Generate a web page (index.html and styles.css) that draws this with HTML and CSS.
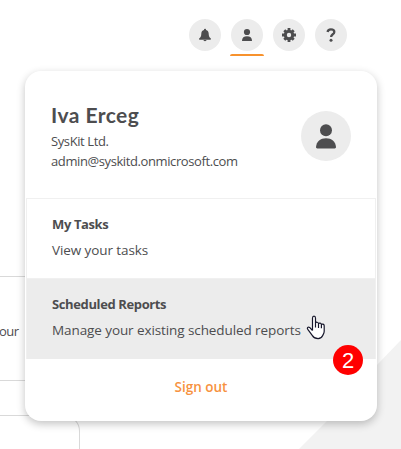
FILE: index.html
```
<!DOCTYPE html>
<html lang="en">
<head>
<meta charset="utf-8">
<title>SysKit</title>
<link rel="stylesheet" href="styles.css">
</head>
<body>
<header class="toolbar">
  <span class="tool"><svg width="14" height="14" viewBox="0 0 14 14"><path d="M7 .7c.6 0 1 .4 1 .9v.4c1.8.5 2.700 1.900 2.700 3.800 0 2.500.6 3.500 1.900 4.500.7.5.5 1.400-.4 1.400H1.800c-.9 0-1.100-.9-.4-1.400 1.300-1 1.900-2 1.900-4.500C3.300 3.900 4.200 2.500 6 2v-.4c0-.5.4-.9 1-.9zM5.500 12h3c0 .7-.6 1.200-1.500 1.200S5.500 12.700 5.500 12z"/></svg></span>
  <span class="tool active"><svg width="12" height="14" viewBox="0 0 12 14"><circle cx="6" cy="4" r="3.100"/><path d="M1 12.400C1 9.800 3 8.200 6 8.200s5 1.600 5 4.200c0 .4-.2.600-.6.600H1.600c-.4 0-.6-.2-.6-.6z"/></svg></span>
  <span class="tool"><svg width="14" height="14" viewBox="-7 -7 14 14"><circle r="3.700" fill="none" stroke="#4d4d4f" stroke-width="3"/><g stroke="#4d4d4f" stroke-width="2.800"><path d="M0-7v3M0 4v3M-7 0h3M4 0h3"/><path d="M-4.700-4.700l2 2M2.700 2.700l2 2M-4.700 4.700l2-2M2.700-2.700l2-2"/></g></svg></span>
  <span class="tool"><svg width="10" height="14" viewBox="0 0 10 14"><path d="M1.600 4C1.800 2.200 3 1.300 4.900 1.300c2 0 3.400 1 3.400 2.600 0 2.400-3.200 2.300-3.200 5" fill="none" stroke="#4d4d4f" stroke-width="2.300"/><circle cx="5" cy="12.200" r="1.500"/></svg></span>
</header>
<main class="page">
  <div class="row row-a"></div>
  <div class="row row-b"><span>our</span></div>
  <div class="row row-c"></div>
  <div class="panel"></div>
</main>
<svg class="corner" width="102" height="109" viewBox="0 0 102 109"><path d="M102 0v109H0L28 81 78 25z" fill="#f2f2f2"/></svg>
<section class="menu">
  <div class="profile">
    <div class="identity">
      <h1>Iva Erceg</h1>
      <p>SysKit Ltd.</p>
      <p>admin@syskitd.onmicrosoft.com</p>
    </div>
    <div class="avatar"><svg width="20" height="25" viewBox="0 0 20 25"><circle cx="10" cy="6.300" r="6"/><path d="M0 23C.5 17.500 4.500 14.300 10 14.300S19.500 17.500 20 23c0 .9-.5 1.400-1.300 1.400H1.300C.5 24.400 0 23.900 0 23z"/></svg></div>
  </div>
  <a class="item">
    <strong>My Tasks</strong>
    <span class="desc">View your tasks</span>
  </a>
  <a class="item hover">
    <strong>Scheduled Reports</strong>
    <span class="desc">Manage your existing scheduled reports</span>
  </a>
  <a class="signout">Sign out</a>
</section>
<svg class="cursor" width="20" height="25" viewBox="0 0 20 25"><path d="M6.500 15.500V3.200C6.500.5 9.500.5 9.500 3.200v5c.4-1.500 2.900-1.300 3 .6.600-1.200 2.800-.9 2.900.8.700-1 2.800-.6 2.800 1.200v5.400c0 2-.8 2.900-1.500 4.300-.8 1.900-2 3.100-4.600 3.100-3 0-4.500-1-5.700-3l-4.600-6.200c-1.200-1.700.4-3 1.800-2l2.900 3.100M9.500 8v4.500M12.500 9v4M15.400 9.800v3.500" fill="#fff" stroke="#17172b" stroke-width="1.200" stroke-linejoin="round"/></svg>
<div class="badge">2</div>
</body>
</html>
```
FILE: styles.css
```
* { box-sizing: border-box; }
body {
  margin: 0;
  width: 401px;
  height: 449px;
  overflow: hidden;
  position: relative;
  background: #fff;
  color: #4d4d4f;
  font: 13px/20px "Open Sans", "Noto Sans", sans-serif;
}
svg { display: block; fill: #4d4d4f; }
h1, p { margin: 0; font-weight: 400; }
p { letter-spacing: -.4px; }
.toolbar {
  display: flex;
  gap: 10px;
  height: 61px;
  padding: 19px 0 0 189px;
}
.tool {
  width: 32px;
  height: 32px;
  border-radius: 50%;
  background: #ececec;
  display: grid;
  place-items: center;
  position: relative;
}
.tool.active::after {
  content: "";
  position: absolute;
  left: -1px;
  top: 35px;
  width: 34px;
  height: 2px;
  border-radius: 2px 2px 0 0;
  background: #f7922d;
}
.page { padding-top: 215px; }
.row { width: 60px; border-top: 1px solid #d9d9d9; }
.row-a { height: 1px; }
.row-b { height: 103px; padding-top: 44px; border: 0; }
.row-b span { display: block; margin-left: -1px; letter-spacing: -.5px; }
.row-c { height: 35px; }
.panel {
  width: 80px;
  height: 34px;
  border: solid #d9d9d9;
  border-width: 1px 1px 0 0;
  border-radius: 0 16px 0 0;
}
.corner { position: absolute; right: 0; bottom: 0; }
.menu {
  position: absolute;
  left: 25px;
  top: 71px;
  width: 352px;
  height: 350px;
  border-radius: 16px;
  background: #fff;
  box-shadow: 0 3px 8px rgba(0, 0, 0, .24);
  padding: 0 1px;
}
.profile {
  height: 127px;
  padding: 30px 25px 0;
  display: flex;
  justify-content: space-between;
}
h1 {
  font: 700 21px/28px Lato, sans-serif;
  letter-spacing: .45px;
  height: 30px;
}
.avatar {
  width: 50px;
  height: 50px;
  margin-top: 10px;
  border-radius: 50%;
  background: #ececec;
  display: grid;
  place-items: center;
}
.item {
  display: flex;
  flex-direction: column;
  height: 80px;
  padding: 15px 25px 0;
  border: 1px solid #f0f0f0;
  border-bottom: 0;
  white-space: nowrap;
}
.item strong { height: 26px; font-weight: 700; letter-spacing: -.38px; }
.desc { font-size: 13.5px; letter-spacing: -.09px; }
.item.hover { height: 81px; background: #ececec; }
.signout {
  display: block;
  padding-top: 18px;
  text-align: center;
  font-size: 13.5px;
  font-weight: 600;
  color: #f7923f;
}
.cursor { position: absolute; left: 306px; top: 315px; }
.badge {
  position: absolute;
  left: 333px;
  top: 345px;
  width: 30px;
  height: 30px;
  border-radius: 50%;
  background: #f00;
  color: #fff;
  text-align: center;
  font: 22px/31px "Liberation Sans", sans-serif;
}
```
